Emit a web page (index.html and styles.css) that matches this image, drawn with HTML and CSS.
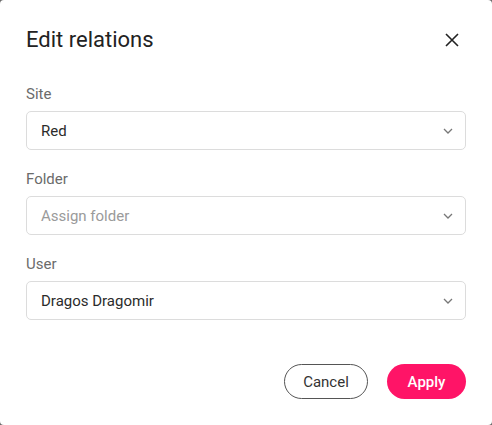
FILE: index.html
```html
<!DOCTYPE html>
<html>
<head>
<meta charset="utf-8">
<link rel="stylesheet" href="styles.css">
</head>
<body>
<div class="dialog">
  <div class="header">
    <h1 class="title">Edit relations</h1>
    <button class="close" aria-label="Close">
      <svg width="14" height="14" viewBox="0 0 14 14"><path d="M1 1L13 13M13 1L1 13" stroke="#222" stroke-width="1.6" fill="none"/></svg>
    </button>
  </div>
  <div class="fields">
    <div class="field">
      <label class="label">Site</label>
      <div class="select"><span class="value">Red</span><svg class="chev" width="10" height="6" viewBox="0 0 10 6"><path d="M1 1L5 5L9 1" stroke="#777" stroke-width="1.3" fill="none"/></svg></div>
    </div>
    <div class="field">
      <label class="label">Folder</label>
      <div class="select"><span class="value placeholder">Assign folder</span><svg class="chev" width="10" height="6" viewBox="0 0 10 6"><path d="M1 1L5 5L9 1" stroke="#777" stroke-width="1.3" fill="none"/></svg></div>
    </div>
    <div class="field">
      <label class="label">User</label>
      <div class="select"><span class="value">Dragos Dragomir</span><svg class="chev" width="10" height="6" viewBox="0 0 10 6"><path d="M1 1L5 5L9 1" stroke="#777" stroke-width="1.3" fill="none"/></svg></div>
    </div>
  </div>
  <div class="actions">
    <button class="btn cancel">Cancel</button>
    <button class="btn apply">Apply</button>
  </div>
</div>
</body>
</html>
```
FILE: styles.css
```css
html { background: #6a6a6a; }
body { margin: 0; font-family: Roboto, "Noto Sans", sans-serif; }
.dialog {
  background: #fff;
  border-radius: 4px;
  height: 425px;
  box-sizing: border-box;
  padding: 27px 26px 0 26px;
  display: flex;
  flex-direction: column;
}
.header { display: flex; justify-content: space-between; align-items: center; height: 26px; }
.title { margin: 0; font-size: 22px; font-weight: 400; color: #222; line-height: 26px; }
.close { background: none; border: 0; padding: 0; width: 14px; height: 14px; margin-right: 7px; display: flex; }
.fields { display: flex; flex-direction: column; gap: 21px; margin-top: 33px; }
.field { display: flex; flex-direction: column; gap: 8px; }
.label { font-size: 15px; color: #6b6b6b; line-height: 17px; }
.select {
  height: 39px; box-sizing: border-box;
  border: 1px solid #dcdcdc; border-radius: 5px;
  display: flex; align-items: center; justify-content: space-between;
  padding: 0 12px 0 14px;
}
.value { font-size: 15px; color: #2b2b2b; }
.placeholder { color: #9a9a9a; }
.actions { display: flex; justify-content: flex-end; gap: 19px; margin-top: 44px; }
.btn { height: 35px; border-radius: 18px; font-family: Roboto, sans-serif; font-size: 15px; padding: 0; }
.cancel { width: 84px; background: #fff; border: 1px solid #555; color: #333; }
.apply { width: 79px; background: #ff1467; border: 0; color: #fff; font-weight: 500; }
```
